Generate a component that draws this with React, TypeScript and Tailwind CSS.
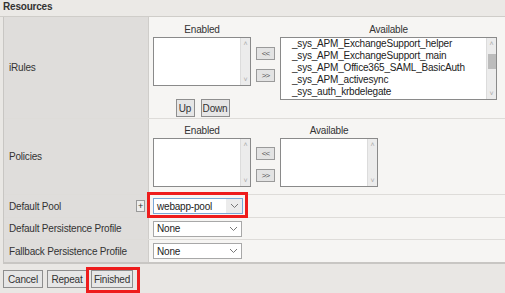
import React from 'react';

const font = { fontFamily: '"Liberation Sans", Arial, sans-serif' };

const MoveBtn = ({ label }: { label: string }) => (
  <div className="w-[19px] h-[13px] flex items-center justify-center border border-[#9a9a9a] bg-[#e3e3e3] text-[8px] leading-none text-[#555] tracking-[-1px]">
    {label}
  </div>
);

const ScrollBar = ({ thumb = false }: { thumb?: boolean }) => (
  <div className="w-[10px] h-full bg-[#ececec] border-l border-[#dcdcdc] flex flex-col items-center justify-between py-[2px] text-[7px] leading-none text-[#aaa]">
    <span>˄</span>
    {thumb && <div className="w-[8px] h-[15px] bg-[#bcbcbc] -mt-[14px]" />}
    <span>˅</span>
  </div>
);

const ListBox = ({ w, h, items = [], thumb = false }: { w: string; h: string; items?: string[]; thumb?: boolean }) => (
  <div className={`${w} ${h} flex bg-white border border-[#8a8a8a]`}>
    <div className="flex-1 pl-[11px] text-[10px] tracking-[-0.2px] leading-[12px] text-[#222] overflow-hidden whitespace-nowrap">
      {items.map((i) => (
        <div key={i}>{i}</div>
      ))}
    </div>
    <ScrollBar thumb={thumb} />
  </div>
);

const Select = ({ value, w, focus = false }: { value: string; w: string; focus?: boolean }) => (
  <div className={`${w} h-[16px] flex items-center bg-white border ${focus ? 'border-[#7aa7d6]' : 'border-[#a8a8a8]'}`}>
    <span className="flex-1 pl-[3px] text-[10px] tracking-[-0.2px] text-[#222]">{value}</span>
    <div className={`w-[16px] h-full flex items-center justify-center ${focus ? 'bg-[#ececec]' : ''}`}>
      <svg width="9" height="6" viewBox="0 0 9 6"><path d="M1 1l3.5 3.5L8 1" fill="none" stroke="#777" strokeWidth="1" /></svg>
    </div>
  </div>
);

const Btn = ({ label, className = '' }: { label: string; className?: string }) => (
  <div className={`h-[18px] flex items-center justify-center border border-[#8e8e8e] bg-[#e6e6e6] text-[10px] tracking-[-0.2px] text-[#333] ${className}`}>
    {label}
  </div>
);

const Label = ({ text }: { text: string }) => (
  <div className="w-[145px] shrink-0 bg-[#dfdddb] border-r border-[#cfcdca] pl-[5px] flex items-center text-[10px] tracking-[-0.2px] text-[#333]">
    {text}
  </div>
);

const ColHead = ({ text }: { text: string }) => (
  <div className="text-[10px] tracking-[-0.2px] text-[#333] leading-[12px] mb-[1px]">{text}</div>
);

export default function App() {
  return (
    <div className="w-[505px] h-[293px] bg-[#e9e7e4] overflow-hidden relative" style={font}>
      <div className="h-[17px] bg-[#ebe9e6] border-b border-[#cfcdc9] pl-[3px] text-[10px] font-bold text-[#333] leading-[14px] tracking-[-0.2px]">
        Resources
      </div>
      <div className="ml-[3px] border-l border-b-2 border-[#c8c6c3] bg-[#f6f5f3]">
        {/* iRules */}
        <div className="h-[102px] flex border-b border-[#dedcd9]">
          <Label text="iRules" />
          <div className="flex-1 flex pl-[4px] pt-[7px] gap-[5px]">
            <div className="flex flex-col items-center">
              <ColHead text="Enabled" />
              <ListBox w="w-[98px]" h="h-[49px]" />
              <div className="flex gap-[6px] mt-[13px] ml-[1px]">
                <Btn label="Up" className="h-[16px] w-[19px]" />
                <Btn label="Down" className="h-[16px] w-[29px]" />
              </div>
            </div>
            <div className="flex flex-col gap-[9px] pt-[23px]">
              <MoveBtn label="<<" />
              <MoveBtn label=">>" />
            </div>
            <div className="flex flex-col items-center">
              <ColHead text="Available" />
              <ListBox
                w="w-[217px]"
                h="h-[63px]"
                thumb
                items={[
                  '_sys_APM_ExchangeSupport_helper',
                  '_sys_APM_ExchangeSupport_main',
                  '_sys_APM_Office365_SAML_BasicAuth',
                  '_sys_APM_activesync',
                  '_sys_auth_krbdelegate',
                ]}
              />
            </div>
          </div>
        </div>
        {/* Policies */}
        <div className="h-[76px] flex border-b border-[#dedcd9]">
          <Label text="Policies" />
          <div className="flex-1 flex pl-[4px] pt-[6px] gap-[5px]">
            <div className="flex flex-col items-center">
              <ColHead text="Enabled" />
              <ListBox w="w-[98px]" h="h-[49px]" />
            </div>
            <div className="flex flex-col gap-[9px] pt-[22px]">
              <MoveBtn label="<<" />
              <MoveBtn label=">>" />
            </div>
            <div className="flex flex-col items-center">
              <ColHead text="Available" />
              <ListBox w="w-[98px]" h="h-[49px]" />
            </div>
          </div>
        </div>
        {/* Default Pool */}
        <div className="h-[23px] flex border-b border-[#dedcd9]">
          <div className="w-[145px] shrink-0 bg-[#dfdddb] border-r border-[#cfcdca] pl-[5px] pr-[3px] flex items-center justify-between text-[10px] tracking-[-0.2px] text-[#333]">
            <span>Default Pool</span>
            <div className="w-[9px] h-[12px] border border-[#999] bg-[#eee] flex items-center justify-center text-[9px] leading-none">+</div>
          </div>
          <div className="flex-1 flex items-center pl-[4px] relative">
            <Select value="webapp-pool" w="w-[90px]" focus />
            <div className="absolute left-[-2px] top-[-3px] w-[101px] h-[26px] border-[3px] border-[#ee1c1c]" />
          </div>
        </div>
        {/* Default Persistence */}
        <div className="h-[22px] flex border-b border-[#dedcd9]">
          <Label text="Default Persistence Profile" />
          <div className="flex-1 flex items-center pl-[4px]">
            <Select value="None" w="w-[89px]" />
          </div>
        </div>
        {/* Fallback */}
        <div className="h-[22px] flex">
          <Label text="Fallback Persistence Profile" />
          <div className="flex-1 flex items-center pl-[4px]">
            <Select value="None" w="w-[89px]" />
          </div>
        </div>
      </div>
      <div className="flex gap-[4px] pl-[3px] pt-[6px]">
        <Btn label="Cancel" className="w-[40px]" />
        <Btn label="Repeat" className="w-[40px]" />
        <div className="relative">
          <Btn label="Finished" className="w-[42px]" />
          <div className="absolute left-[-5px] top-[-3px] w-[54px] h-[26px] border-[3px] border-[#ee1c1c]" />
        </div>
      </div>
    </div>
  );
}
